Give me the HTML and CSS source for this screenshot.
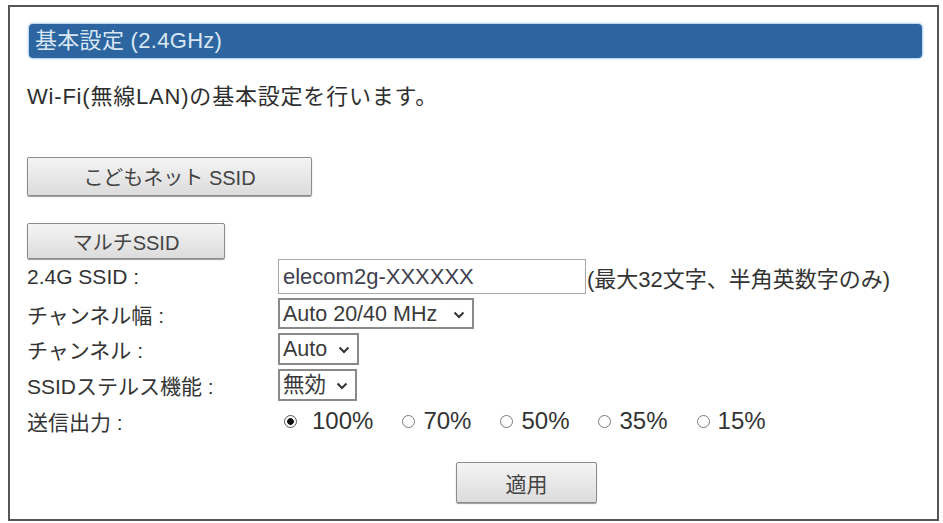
FILE: index.html
```html
<!DOCTYPE html>
<html lang="ja">
<head>
<meta charset="utf-8">
<title>基本設定 (2.4GHz)</title>
<link rel="stylesheet" href="styles.css">
</head>
<body>
<div class="panel">
  <div class="header">基本設定 (2.4GHz)</div>
  <p class="intro">Wi-Fi(無線LAN)の基本設定を行います。</p>
  <button class="btn btn-kids" type="button">こどもネット SSID</button>
  <button class="btn btn-multi" type="button">マルチSSID</button>
  <div class="form">
    <div class="label row1">2.4G SSID :</div>
    <div class="field row1">
      <input class="text-input" type="text" value="elecom2g-XXXXXX">
      <span class="note">(最大32文字、半角英数字のみ)</span>
    </div>

    <div class="label row2">チャンネル幅 :</div>
    <div class="field row2">
      <span class="select-wrap w-width">
        <select class="select"><option>Auto 20/40 MHz</option></select>
        <svg class="chev" viewBox="0 0 12 8" width="12" height="8"><path d="M1.5 1.5 L6 6 L10.5 1.5" fill="none" stroke="#333" stroke-width="2"/></svg>
      </span>
    </div>

    <div class="label row3">チャンネル :</div>
    <div class="field row3">
      <span class="select-wrap w-ch">
        <select class="select"><option>Auto</option></select>
        <svg class="chev" viewBox="0 0 12 8" width="12" height="8"><path d="M1.5 1.5 L6 6 L10.5 1.5" fill="none" stroke="#333" stroke-width="2"/></svg>
      </span>
    </div>

    <div class="label row4">SSIDステルス機能 :</div>
    <div class="field row4">
      <span class="select-wrap w-stealth">
        <select class="select"><option>無効</option></select>
        <svg class="chev" viewBox="0 0 12 8" width="12" height="8"><path d="M1.5 1.5 L6 6 L10.5 1.5" fill="none" stroke="#333" stroke-width="2"/></svg>
      </span>
    </div>

    <div class="label row5">送信出力 :</div>
    <div class="field row5 radios">
      <label class="radio first"><input type="radio" name="power" checked><span>100%</span></label>
      <label class="radio"><input type="radio" name="power"><span>70%</span></label>
      <label class="radio"><input type="radio" name="power"><span>50%</span></label>
      <label class="radio"><input type="radio" name="power"><span>35%</span></label>
      <label class="radio"><input type="radio" name="power"><span>15%</span></label>
    </div>
  </div>
  <div class="apply-row">
    <button class="btn btn-apply" type="button">適用</button>
  </div>
</div>
</body>
</html>
```

FILE: styles.css
```css
html, body {
  margin: 0;
  padding: 0;
  background: #ffffff;
}

body {
  font-family: "Liberation Sans", Arial, "Noto Sans CJK JP", sans-serif;
  color: #333333;
  font-size: 21px;
}

.panel {
  box-sizing: border-box;
  margin: 5px 4px 0 8px;
  height: 516px;
  border: 2px solid #555555;
  padding: 17px 15px 0 17px;
}

.header {
  margin-left: 2px;
  height: 34px;
  line-height: 34px;
  padding-left: 6px;
  background: #2c659f;
  color: #d9e7f5;
  border-radius: 4px;
  box-shadow: 0 0 2px 1px #a9cdec;
  font-size: 22px;
  letter-spacing: 0.3px;
}

.intro {
  margin: 27px 0 0 0;
  line-height: 24px;
  font-size: 22px;
  letter-spacing: 0.8px;
  color: #2e2e2e;
}

.btn {
  display: block;
  font-family: "Liberation Sans", Arial, "Noto Sans CJK JP", sans-serif;
  font-size: 20px;
  color: #444444;
  border: 1px solid #8c8c8c;
  border-radius: 2px;
  background: linear-gradient(#f4f4f4, #dcdcdc);
  box-shadow: 0 1px 1px #9a9a9a;
  padding: 0;
}

.btn-kids {
  margin-top: 48px;
  width: 285px;
  height: 39px;
}

.btn-multi {
  margin-top: 27px;
  width: 198px;
  height: 36px;
}

.form {
  display: grid;
  grid-template-columns: 251px 1fr;
  grid-template-rows: 35px 31px 32px 32px 32px;
  row-gap: 4px;
  align-items: center;
}

.row1 { grid-row: 1; }
.row2 { grid-row: 2; }
.row3 { grid-row: 3; }
.row4 { grid-row: 4; }
.row5 { grid-row: 5; }

.label {
  grid-column: 1;
  font-size: 21px;
  color: #333333;
}

.field {
  grid-column: 2;
  display: flex;
  align-items: center;
  height: 100%;
}

.text-input {
  box-sizing: border-box;
  width: 308px;
  height: 35px;
  border: 1.5px solid #a8a8a8;
  padding: 0 4px;
  font-family: "Liberation Sans", Arial, sans-serif;
  font-size: 22px;
  color: #3f3f4f;
  background: #ffffff;
  margin: 0;
}

.note {
  margin-left: 1px;
  font-size: 22px;
  color: #333333;
}

.select-wrap {
  position: relative;
  display: inline-block;
  height: 100%;
}

.select {
  -webkit-appearance: none;
  appearance: none;
  box-sizing: border-box;
  height: 100%;
  width: 100%;
  border: 2px solid #8a8a8a;
  border-radius: 0;
  background: #ffffff;
  padding: 0 0 0 3px;
  font-family: "Liberation Sans", Arial, "Noto Sans CJK JP", sans-serif;
  font-size: 21.5px;
  color: #3a3a3a;
  margin: 0;
}

.w-width { width: 196px; }
.w-ch { width: 81px; }
.w-stealth { width: 79px; }

.chev {
  position: absolute;
  right: 9px;
  top: 50%;
  margin-top: -3px;
  pointer-events: none;
}

.radios {
  padding-left: 6px;
  gap: 29px;
}

.radio {
  display: inline-flex;
  align-items: center;
  gap: 8px;
  font-size: 24px;
  color: #333333;
}

.radio.first {
  gap: 15px;
}

.radio input {
  -webkit-appearance: none;
  appearance: none;
  box-sizing: border-box;
  width: 13px;
  height: 13px;
  margin: 0;
  border: 1.5px solid #7a7a7a;
  border-radius: 50%;
  background: #ffffff;
}

.radio input:checked {
  background: radial-gradient(circle, #111111 0 3px, #ffffff 3.7px);
  border-color: #555555;
}

.apply-row {
  display: flex;
  margin-top: 25px;
}

.btn-apply {
  margin-left: 429px;
  width: 141px;
  height: 41px;
  font-size: 21px;
}
```
